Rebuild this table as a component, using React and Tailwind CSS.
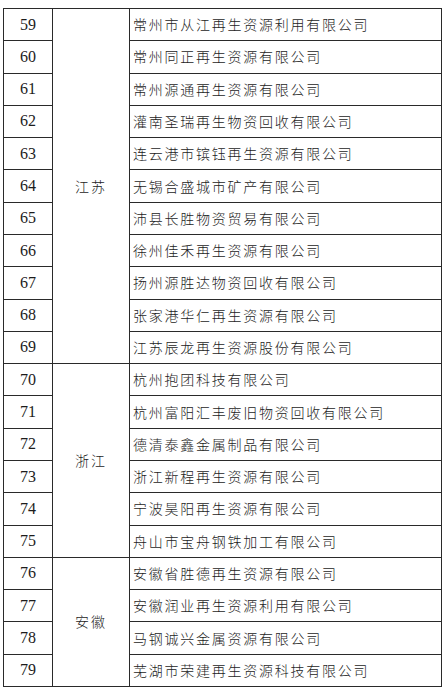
const groups = [
  {
    province: "江苏",
    span: "row-span-11",
    rows: [
      [59, "常州市从江再生资源利用有限公司"],
      [60, "常州同正再生资源有限公司"],
      [61, "常州源通再生资源有限公司"],
      [62, "灌南圣瑞再生物资回收有限公司"],
      [63, "连云港市镔钰再生资源有限公司"],
      [64, "无锡合盛城市矿产有限公司"],
      [65, "沛县长胜物资贸易有限公司"],
      [66, "徐州佳禾再生资源有限公司"],
      [67, "扬州源胜达物资回收有限公司"],
      [68, "张家港华仁再生资源有限公司"],
      [69, "江苏辰龙再生资源股份有限公司"],
    ],
  },
  {
    province: "浙江",
    span: "row-span-6",
    rows: [
      [70, "杭州抱团科技有限公司"],
      [71, "杭州富阳汇丰废旧物资回收有限公司"],
      [72, "德清泰鑫金属制品有限公司"],
      [73, "浙江新程再生资源有限公司"],
      [74, "宁波昊阳再生资源有限公司"],
      [75, "舟山市宝舟钢铁加工有限公司"],
    ],
  },
  {
    province: "安徽",
    span: "row-span-4",
    rows: [
      [76, "安徽省胜德再生资源有限公司"],
      [77, "安徽润业再生资源利用有限公司"],
      [78, "马钢诚兴金属资源有限公司"],
      [79, "芜湖市荣建再生资源科技有限公司"],
    ],
  },
];

export default function App() {
  return (
    <div className="w-[445px] h-[697px] bg-white pt-[8px] pl-[3px] font-['Noto_Sans_CJK_SC',sans-serif] text-[#1c1c1c]">
      {/* table: number | province | company */}
      <div className="grid grid-cols-[48px_76px_311px] grid-rows-[repeat(21,minmax(0,1fr))] gap-px p-px bg-[#2a2a2a] w-[439px] h-[679px]">
        {groups.map((g) =>
          g.rows.map(([num, name], i) => (
            <>
              <div
                key={num + "n"}
                className="col-start-1 bg-white flex items-center justify-center text-[16px] font-['Liberation_Serif',serif]"
              >
                {num}
              </div>
              {i === 0 && (
                <div
                  key={num + "p"}
                  className={`col-start-2 ${g.span} bg-white flex items-center justify-center text-[14px] tracking-[2px] font-light`}
                >
                  {g.province}
                </div>
              )}
              <div
                key={num + "c"}
                className="col-start-3 bg-white flex items-center pl-[3px] text-[14px] tracking-[1.75px] font-light whitespace-nowrap"
              >
                {name}
              </div>
            </>
          ))
        )}
      </div>
    </div>
  );
}
